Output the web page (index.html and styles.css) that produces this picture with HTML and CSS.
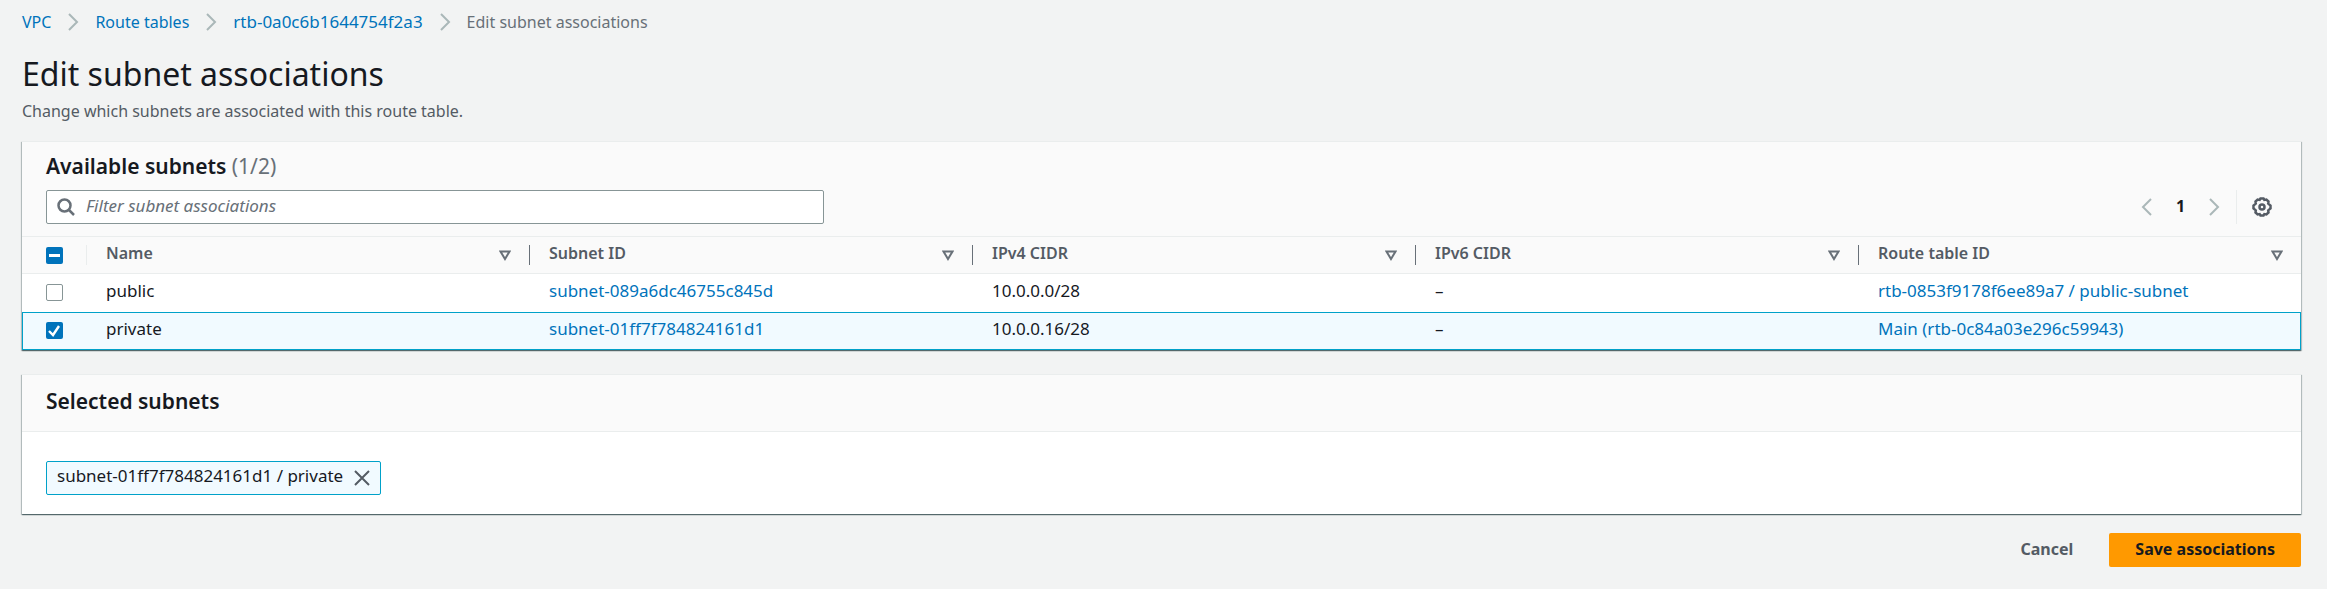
FILE: index.html
```html
<!DOCTYPE html>
<html lang="en">
<head>
<meta charset="utf-8">
<meta name="viewport" content="width=device-width, initial-scale=1">
<title>Edit subnet associations</title>
<link rel="stylesheet" href="styles.css">
</head>
<body>
<main class="page">
  <nav class="breadcrumbs" aria-label="Breadcrumbs">
    <a href="#">VPC</a>
    <svg class="crumb-arrow" viewBox="0 0 12 18" aria-hidden="true"><path d="M2 1l8 8-8 8"/></svg>
    <a href="#">Route tables</a>
    <svg class="crumb-arrow" viewBox="0 0 12 18" aria-hidden="true"><path d="M2 1l8 8-8 8"/></svg>
    <a class="resource-id" href="#">rtb-0a0c6b1644754f2a3</a>
    <svg class="crumb-arrow" viewBox="0 0 12 18" aria-hidden="true"><path d="M2 1l8 8-8 8"/></svg>
    <span class="crumb-current">Edit subnet associations</span>
  </nav>

  <header class="page-header">
    <h1>Edit subnet associations</h1>
    <p>Change which subnets are associated with this route table.</p>
  </header>

  <section class="card">
    <div class="card-tools">
      <h2>Available subnets <span class="count">(1/2)</span></h2>
      <div class="tool-row">
        <label class="filter">
          <svg class="search-icon" viewBox="0 0 18 18" aria-hidden="true"><circle cx="7.5" cy="7.5" r="6"/><path d="M12 12l5 5"/></svg>
          <input type="text" placeholder="Filter subnet associations" aria-label="Filter subnet associations">
        </label>
        <div class="pager">
          <button class="icon-button" type="button" aria-label="Previous page"><svg class="page-arrow" viewBox="0 0 12 18" aria-hidden="true"><path d="M10 1L2 9l8 8"/></svg></button>
          <button class="icon-button page-number" type="button">1</button>
          <button class="icon-button" type="button" aria-label="Next page"><svg class="page-arrow" viewBox="0 0 12 18" aria-hidden="true"><path d="M2 1l8 8-8 8"/></svg></button>
          <button class="icon-button settings" type="button" aria-label="Preferences"><svg class="gear" viewBox="0 0 20 20" aria-hidden="true"><path d="M8.5 1.5h3l.8 1.4 2.1-.4 2.1 2-.3 2.1 2.3 1.9v3l-2.3 1.9.3 2.1-2.1 2-2.1-.4-.8 1.4h-3l-.8-1.4-2.1.4-2.1-2 .3-2.1-2.3-1.9v-3l2.3-1.9-.3-2.1 2.1-2 2.1.4z"/><circle cx="10" cy="10" r="2.5"/></svg></button>
        </div>
      </div>
    </div>
    <table class="subnets">
      <colgroup><col class="col-select"><col><col><col><col><col></colgroup>
      <thead>
        <tr>
          <th class="select"><input class="check partial" type="checkbox" aria-label="Select all subnets"></th>
          <th><button class="sort" type="button"><span>Name</span><svg class="caret" viewBox="0 0 12 11" aria-hidden="true"><path d="M1.5 1.5h9L6 9z"/></svg></button></th>
          <th><button class="sort" type="button"><span>Subnet ID</span><svg class="caret" viewBox="0 0 12 11" aria-hidden="true"><path d="M1.5 1.5h9L6 9z"/></svg></button></th>
          <th><button class="sort" type="button"><span>IPv4 CIDR</span><svg class="caret" viewBox="0 0 12 11" aria-hidden="true"><path d="M1.5 1.5h9L6 9z"/></svg></button></th>
          <th><button class="sort" type="button"><span>IPv6 CIDR</span><svg class="caret" viewBox="0 0 12 11" aria-hidden="true"><path d="M1.5 1.5h9L6 9z"/></svg></button></th>
          <th><button class="sort" type="button"><span>Route table ID</span><svg class="caret" viewBox="0 0 12 11" aria-hidden="true"><path d="M1.5 1.5h9L6 9z"/></svg></button></th>
        </tr>
      </thead>
      <tbody>
        <tr>
          <td class="select"><input class="check" type="checkbox" aria-label="Select public"></td>
          <td>public</td>
          <td><a href="#">subnet-089a6dc46755c845d</a></td>
          <td>10.0.0.0/28</td>
          <td>–</td>
          <td><a href="#">rtb-0853f9178f6ee89a7 / public-subnet</a></td>
        </tr>
        <tr class="selected">
          <td class="select"><input class="check" type="checkbox" aria-label="Select private" checked></td>
          <td>private</td>
          <td><a href="#">subnet-01ff7f784824161d1</a></td>
          <td>10.0.0.16/28</td>
          <td>–</td>
          <td><a href="#">Main (rtb-0c84a03e296c59943)</a></td>
        </tr>
      </tbody>
    </table>
  </section>

  <section class="card">
    <div class="card-head"><h2>Selected subnets</h2></div>
    <div class="card-body">
      <span class="token"><span class="token-text">subnet-01ff7f784824161d1 / private</span>
        <button class="icon-button" type="button" aria-label="Remove private"><svg class="close" viewBox="0 0 16 16" aria-hidden="true"><path d="M1 1l14 14M15 1L1 15"/></svg></button>
      </span>
    </div>
  </section>

  <footer class="actions">
    <button class="button" type="button">Cancel</button>
    <button class="button primary" type="button">Save associations</button>
  </footer>
</main>
</body>
</html>
```
FILE: styles.css
```css
* { box-sizing: border-box; }

body {
  margin: 0;
  background: #f2f3f3;
  color: #16191f;
  font: 16px/24px "Noto Sans", "Open Sans", sans-serif;
}

h1, h2, p { margin: 0; }
a { color: #0073bb; text-decoration: none; }
svg { display: block; flex: none; fill: none; stroke: currentColor; stroke-width: 2; }
button, input { font: inherit; color: inherit; }
button { padding: 0; border: 0; background: none; cursor: pointer; }

.page { padding: 10px 26px 22px 22px; }

.breadcrumbs { display: flex; align-items: center; gap: 16px; height: 24px; }
.crumb-arrow { width: 12px; height: 18px; color: #aab7b8; }
.crumb-current { color: #687078; }
.resource-id { font-size: 17px; }

.page-header { padding: 18px 0; }
.page-header h1 { font-size: 32px; line-height: 44px; font-weight: 400; }
.page-header p { color: #545b64; padding-top: 3px; }

.card {
  background: #fff;
  border-top: 1px solid #eaeded;
  box-shadow: 0 1px 1px rgba(0, 28, 36, .45), 1px 1px 1px rgba(0, 28, 36, .2), -1px 1px 1px rgba(0, 28, 36, .2);
}
.card + .card { margin-top: 24px; }
.card h2 { font-size: 21px; line-height: 28px; font-weight: 600; }
.card .count { color: #687078; font-weight: 400; }

.card-tools { padding: 10px 24px 12px; background: #fafafa; }
.tool-row { display: flex; justify-content: space-between; padding-top: 10px; }

.filter {
  display: flex;
  align-items: center;
  gap: 11px;
  width: 35%;
  max-width: 778px;
  height: 34px;
  padding: 0 10px;
  border: 1px solid #879596;
  border-radius: 2px;
  background: #fff;
}
.search-icon { width: 18px; height: 18px; color: #687078; }
.search-icon, .gear { stroke-width: 2.5; }
.filter input { flex: 1; min-width: 0; padding: 0 0 2px; border: 0; outline: 0; background: none; font-size: 17px; }
.filter input::placeholder { color: #687078; font-style: italic; opacity: 1; }

.pager { display: flex; align-items: center; color: #aab7b8; }
.page-arrow { width: 12px; height: 18px; }
.page-number { width: 55px; padding-bottom: 2px; color: #16191f; font-weight: 700; }
.settings { margin-left: 16px; padding: 7px 5px 7px 15px; border-left: 1px solid #eaeded; color: #545b64; }
.gear { width: 20px; height: 20px; }

.subnets { width: 100%; border-collapse: collapse; table-layout: fixed; }
.col-select { width: 64px; }
.subnets th { height: 37px; padding: 0 18px 0 20px; background: #fafafa; border: solid #eaeded; border-width: 1px 0; text-align: left; }
.subnets td { height: 38px; padding: 0 20px 3px; font-size: 17px; }
.subnets .select { padding: 0 0 0 24px; }
.subnets th + th { background: linear-gradient(#687078, #687078) 0 50% / 1px 20px no-repeat #fafafa; }
.subnets .select + th { background-image: linear-gradient(#eaeded, #eaeded); }
.sort { display: flex; align-items: center; justify-content: space-between; width: 100%; color: #545b64; font-weight: 600; }
.sort span { padding-bottom: 4px; }
.caret { width: 12px; height: 11px; color: #687078; }
.selected { background: #f1faff; outline: 1px solid #00a1c9; outline-offset: -1px; }

.check {
  display: block;
  width: 17px;
  height: 17px;
  margin: 0;
  appearance: none;
  border: 1px solid #879596;
  border-radius: 2px;
  background: #fff center / 17px 17px no-repeat;
}
.check:checked, .check.partial { border: 0; background-color: #0073bb; }
.check:checked { background-image: url("data:image/svg+xml,%3Csvg xmlns='http://www.w3.org/2000/svg' viewBox='0 0 17 17'%3E%3Cpath d='M3 9l4 4 6-9' fill='none' stroke='white' stroke-width='2.4'/%3E%3C/svg%3E"); }
.check.partial { background-image: linear-gradient(#fff, #fff); background-size: 11px 3px; }

.card-head { padding: 12px 24px 16px; background: #fafafa; border-bottom: 1px solid #eaeded; }
.card-body { padding: 29px 24px 19px; display: flex; }
.token {
  display: flex;
  align-items: center;
  gap: 11px;
  height: 34px;
  padding: 0 10px;
  border: 1px solid #00a1c9;
  border-radius: 2px;
  background: #f1faff;
  font-size: 17px;
}
.token-text { padding-bottom: 3px; }
.close { width: 16px; height: 16px; color: #545b64; }

.actions { display: flex; justify-content: flex-end; gap: 10px; padding-top: 19px; }
.button { height: 34px; padding: 0 26px 2px; border-radius: 2px; color: #545b64; font-weight: 700; }
.primary { background: #ff9900; color: #16191f; }
```
